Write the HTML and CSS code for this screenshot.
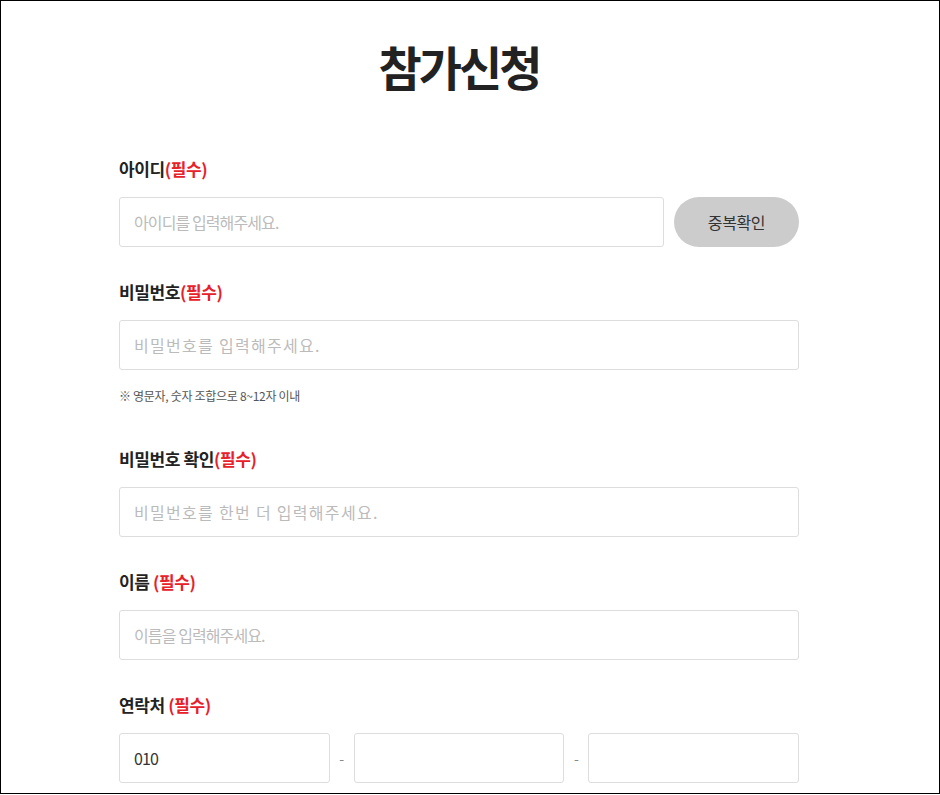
FILE: index.html
```html
<!DOCTYPE html>
<html>
  <head>
    <meta charset="utf-8">
    <title>참가신청</title>
    <link rel="stylesheet" href="styles.css">
  </head>
  <body>
    <div class="frame">
      <div class="join">
        <h1 class="ttl">참가신청</h1>

        <div class="fld">
          <div class="lbl">아이디<span class="req">(필수)</span></div>
          <div class="row">
            <input class="inp" type="text" placeholder="아이디를 입력해주세요.">
            <button class="chk" type="button">중복확인</button>
          </div>
        </div>

        <div class="fld">
          <div class="lbl">비밀번호<span class="req">(필수)</span></div>
          <input class="inp pw" type="password" placeholder="비밀번호를 입력해주세요.">
          <div class="note">※ 영문자, 숫자 조합으로 8~12자 이내</div>
        </div>

        <div class="fld">
          <div class="lbl">비밀번호 확인<span class="req">(필수)</span></div>
          <input class="inp pw" type="password" placeholder="비밀번호를 한번 더 입력해주세요.">
        </div>

        <div class="fld">
          <div class="lbl">이름 <span class="req">(필수)</span></div>
          <input class="inp" type="text" placeholder="이름을 입력해주세요.">
        </div>

        <div class="fld">
          <div class="lbl">연락처 <span class="req">(필수)</span></div>
          <div class="row">
            <input class="inp" type="text" value="010">
            <span class="dash">-</span>
            <input class="inp" type="text">
            <span class="dash">-</span>
            <input class="inp" type="text">
          </div>
        </div>
      </div>
    </div>
  </body>
</html>
```

FILE: styles.css
```css
html, body {
  margin: 0;
  padding: 0;
  background: #ffffff;
}
body {
  font-family: "Noto Sans CJK KR", "Noto Sans", sans-serif;
  color: #222222;
}
.frame {
  box-sizing: border-box;
  height: 794px;
  border: 1px solid #000000;
  padding: 35px 22px 0 0;
  overflow: hidden;
}
.join {
  width: 680px;
  margin: 0 auto;
}
.ttl {
  margin: 0;
  font-size: 47px;
  line-height: 60px;
  font-weight: 700;
  letter-spacing: -3px;
  text-align: center;
  color: #222222;
}
.fld {
  margin-top: 33px;
}
.ttl + .fld {
  margin-top: 61px;
}
.lbl {
  font-size: 17px;
  line-height: 24px;
  font-weight: 700;
  letter-spacing: -0.4px;
  margin-bottom: 16px;
}
.req {
  color: #e8202a;
}
.row {
  display: flex;
  align-items: center;
}
.inp {
  display: block;
  box-sizing: border-box;
  width: 100%;
  height: 50px;
  padding: 0 14px;
  border: 1px solid #dddddd;
  border-radius: 3px;
  font-family: "Noto Sans CJK KR", "Noto Sans", sans-serif;
  font-size: 16px;
  letter-spacing: -0.9px;
  color: #333333;
  outline: none;
}
.row .inp {
  flex: 1;
  min-width: 0;
}
.inp::placeholder {
  color: #bbbbbb;
}
.pw::placeholder {
  letter-spacing: 1.3px;
}
.chk {
  flex: none;
  width: 125px;
  height: 50px;
  margin-left: 10px;
  border: 0;
  border-radius: 25px;
  background: #cccccc;
  font-family: "Noto Sans CJK KR", "Noto Sans", sans-serif;
  font-size: 16px;
  letter-spacing: -0.4px;
  color: #333333;
}
.dash {
  flex: none;
  width: 24px;
  text-align: center;
  font-size: 14px;
  color: #888888;
}
.note {
  margin-top: 14px;
  padding-bottom: 6px;
  font-size: 12px;
  line-height: 24px;
  letter-spacing: -0.3px;
  color: #555555;
}
```
